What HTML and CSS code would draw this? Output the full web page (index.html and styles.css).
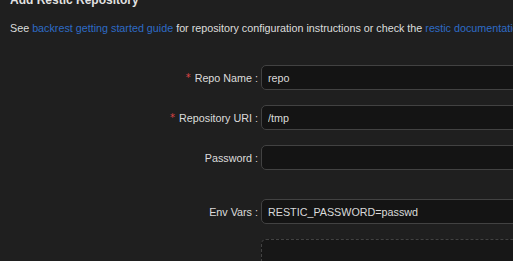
FILE: index.html
```html
<!DOCTYPE html>
<html lang="en">

<head>
  <meta charset="UTF-8" />
  <meta name="viewport" content="width=device-width, initial-scale=1.0" />
  <title>Add Restic Repository</title>
  <link rel="stylesheet" href="styles.css">
</head>

<body>

  <div class="modal-body">
    <h2 class="modal-title">Add Restic Repository</h2>

    <p class="intro">
      See <a href="#">backrest getting started guide</a> for repository configuration instructions or check the
      <a href="#">restic documentation</a> for more details about repositories.
    </p>

    <!-- Repository form -->
    <form class="repo-form">
      <div class="form-row">
        <label class="form-label required">Repo Name</label>
        <div class="form-control"><input type="text" value="repo" /></div>
      </div>

      <div class="form-row">
        <label class="form-label required">Repository URI</label>
        <div class="form-control"><input type="text" value="/tmp" /></div>
      </div>

      <div class="form-row extra-gap">
        <label class="form-label">Password</label>
        <div class="form-control"><input type="text" value="" /></div>
      </div>

      <div class="form-row">
        <label class="form-label">Env Vars</label>
        <div class="form-control"><input type="text" value="RESTIC_PASSWORD=passwd" /></div>
      </div>

      <div class="form-row">
        <div></div>
        <div class="form-control"><div class="dashed-box"></div></div>
      </div>
    </form>
  </div>

</body>

</html>
```

FILE: styles.css
```css
* {
  margin: 0;
  padding: 0;
  box-sizing: border-box;
}

html,
body {
  height: 100%;
  overflow: hidden;
}

body {
  font-family: "Liberation Sans", Arial, sans-serif;
  font-size: 10.75px;
  color: rgba(255, 255, 255, 0.85);
  background-color: #1f1f1f;
}

.modal-body {
  margin-top: -9px;
  padding-left: 10px;
  width: 620px;
}

.modal-title {
  font-size: 12px;
  font-weight: bold;
  line-height: 18px;
  color: rgba(255, 255, 255, 0.88);
}

.intro {
  margin-top: 11px;
  line-height: 16px;
  white-space: nowrap;
}

.intro a {
  color: #2e6bc6;
  text-decoration: none;
}

.repo-form {
  margin-top: 29px;
}

.form-row {
  display: grid;
  grid-template-columns: 251px 1fr;
  margin-bottom: 15px;
}

.form-row.extra-gap {
  margin-bottom: 29px;
}

.form-label {
  display: flex;
  align-items: center;
  justify-content: flex-end;
  height: 25px;
  padding-right: 3px;
  white-space: nowrap;
}

.form-label::after {
  content: ":";
  margin-left: 3px;
}

.form-label.required::before {
  content: "*";
  color: #dc4446;
  margin-right: 4px;
  font-family: "DejaVu Sans", sans-serif;
  font-size: 10px;
}

.form-control input {
  display: block;
  width: 100%;
  height: 25px;
  padding: 0 6px;
  font-family: inherit;
  font-size: 10.75px;
  color: rgba(255, 255, 255, 0.85);
  background-color: #141414;
  border: 1px solid #424242;
  border-radius: 5px;
  outline: none;
}

.dashed-box {
  height: 60px;
  background-color: #171717;
  border: 1px dashed #424242;
  border-radius: 5px;
}
```
